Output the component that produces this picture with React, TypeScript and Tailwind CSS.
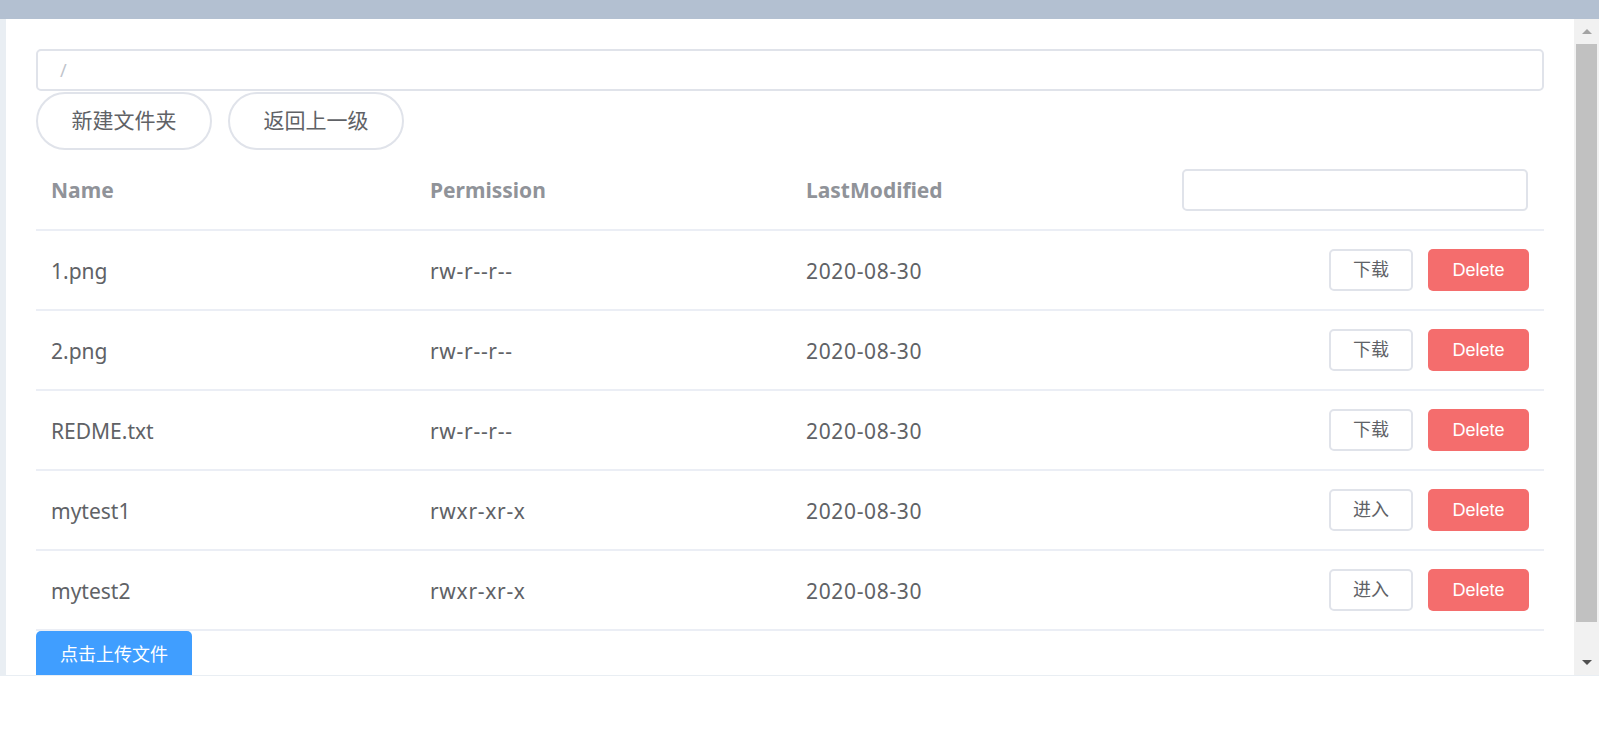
import React from 'react';

type FileRow = {
  name: string;
  permission: string;
  modified: string;
  isDir: boolean;
};

const rows: FileRow[] = [
  { name: '1.png', permission: 'rw-r--r--', modified: '2020-08-30', isDir: false },
  { name: '2.png', permission: 'rw-r--r--', modified: '2020-08-30', isDir: false },
  { name: 'REDME.txt', permission: 'rw-r--r--', modified: '2020-08-30', isDir: false },
  { name: 'mytest1', permission: 'rwxr-xr-x', modified: '2020-08-30', isDir: true },
  { name: 'mytest2', permission: 'rwxr-xr-x', modified: '2020-08-30', isDir: true },
];

const textFont = "font-['Noto_Sans','Noto_Sans_CJK_SC',sans-serif]";
const btnFont = "font-['Liberation_Sans','Noto_Sans_CJK_SC',sans-serif]";

function Scrollbar() {
  return (
    <div className="w-[25px] shrink-0 bg-[#f1f1f1] flex flex-col">
      {/* up arrow */}
      <div className="h-[25px] flex items-center justify-center">
        <div className="w-0 h-0 border-l-[5px] border-r-[5px] border-b-[5px] border-l-transparent border-r-transparent border-b-[#a3a3a3]" />
      </div>
      {/* thumb */}
      <div className="mx-[2px] h-[578px] bg-[#c1c1c1]" />
      <div className="flex-1" />
      {/* down arrow */}
      <div className="h-[25px] flex items-center justify-center">
        <div className="w-0 h-0 border-l-[5px] border-r-[5px] border-t-[5px] border-l-transparent border-r-transparent border-t-[#505050]" />
      </div>
    </div>
  );
}

export default function App() {
  return (
    <div className="w-[1599px] h-[676px] flex flex-col bg-white">
      {/* Header */}
      <div className="h-[19px] shrink-0 bg-[#b3c0d1]" />

      <div className="flex flex-1 min-h-0 border-b border-[#e9eef3]">
        <div className="w-[6px] shrink-0 bg-[#e9eef3]" />

        {/* Main */}
        <div className="flex-1 min-w-0 overflow-hidden px-[30px] pt-[30px]">
          {/* Path input */}
          <div className="h-[42px] border-2 border-[#e0e3ea] rounded-[5px] flex items-center pl-[22px]">
            <span className={`text-[18px] text-[#c0c4cc] ${textFont}`}>/</span>
          </div>

          {/* Actions */}
          <div className="flex gap-[16px] mt-px">
            <button className={`w-[176px] h-[58px] rounded-full border-2 border-[#e0e3ea] bg-white text-[21px] text-[#606266] ${textFont}`}>
              新建文件夹
            </button>
            <button className={`w-[176px] h-[58px] rounded-full border-2 border-[#e0e3ea] bg-white text-[21px] text-[#606266] ${textFont}`}>
              返回上一级
            </button>
          </div>

          {/* Table */}
          <div className={textFont}>
            <div className="grid grid-cols-[379px_376px_376px_1fr] h-[81px] items-center border-b-2 border-[#ebeef5] text-[21px] font-bold text-[#909399]">
              <div className="px-[15px] pt-[2px]">Name</div>
              <div className="px-[15px] pt-[2px]">Permission</div>
              <div className="px-[15px] pt-[2px]">LastModified</div>
              <div className="px-[15px] pr-[16px]">
                <div className="h-[42px] border-2 border-[#e0e3ea] rounded-[5px] bg-white" />
              </div>
            </div>

            {rows.map((r) => (
              <div
                key={r.name}
                className="grid grid-cols-[379px_376px_376px_1fr] h-[80px] items-center border-b-2 border-[#ebeef5] text-[21px] text-[#606266]"
              >
                <div className="px-[15px] pt-[3px]">{r.name}</div>
                <div className="px-[15px] pt-[3px] tracking-[0.7px]">{r.permission}</div>
                <div className="px-[15px] pt-[3px] tracking-[0.65px]">{r.modified}</div>
                <div className="px-[15px] flex justify-end gap-[15px]">
                  <button className={`w-[84px] h-[42px] rounded-[5px] border-2 border-[#e0e3ea] bg-white text-[18px] text-[#606266] ${btnFont}`}>
                    {r.isDir ? '进入' : '下载'}
                  </button>
                  <button className={`w-[101px] h-[42px] rounded-[5px] bg-[#f46d6d] text-[18px] text-white ${btnFont}`}>
                    Delete
                  </button>
                </div>
              </div>
            ))}
          </div>

          {/* Upload */}
          <button className={`w-[156px] h-[48px] rounded-[5px] bg-[#409eff] text-[18px] text-white ${btnFont}`}>
            点击上传文件
          </button>
        </div>

        <Scrollbar />
      </div>
    </div>
  );
}
